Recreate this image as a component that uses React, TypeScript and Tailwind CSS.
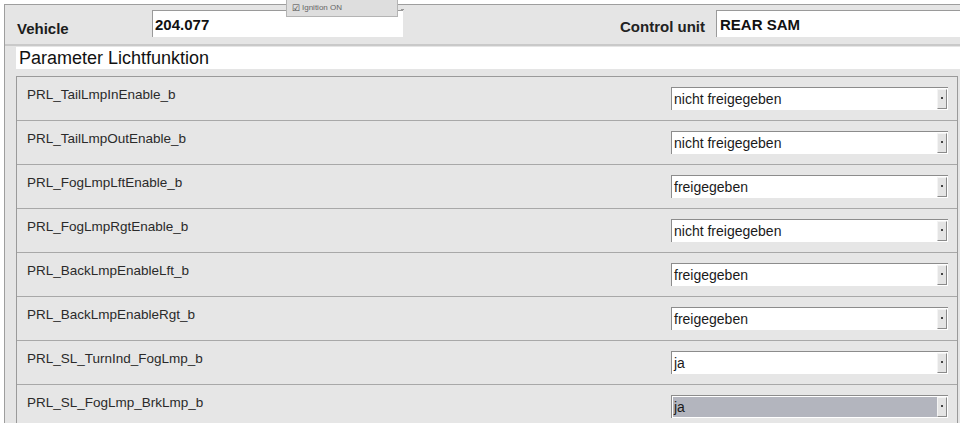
import React from "react"

const params = [
  { name: "PRL_TailLmpInEnable_b", value: "nicht freigegeben" },
  { name: "PRL_TailLmpOutEnable_b", value: "nicht freigegeben" },
  { name: "PRL_FogLmpLftEnable_b", value: "freigegeben" },
  { name: "PRL_FogLmpRgtEnable_b", value: "nicht freigegeben" },
  { name: "PRL_BackLmpEnableLft_b", value: "freigegeben" },
  { name: "PRL_BackLmpEnableRgt_b", value: "freigegeben" },
  { name: "PRL_SL_TurnInd_FogLmp_b", value: "ja" },
  { name: "PRL_SL_FogLmp_BrkLmp_b", value: "ja", selected: true },
]

function Dropdown({ value, selected }: { value: string; selected?: boolean }) {
  return (
    <div className="ml-auto mr-[9px] flex h-[23px] w-[277px] border-l border-t border-[#8c8c8c] bg-white p-[1px]">
      <div
        className={
          selected
            ? "flex flex-1 items-center bg-[#b3b5be] pl-[1px] text-[14px] text-[#1a1a1a]"
            : "flex flex-1 items-center pl-[1px] text-[14px] text-[#1a1a1a]"
        }
      >
        {value}
      </div>
      <div className="flex w-[10px] items-center justify-center border border-b-[#8a8a8a] border-l-[#f4f4f4] border-r-[#8a8a8a] border-t-[#f4f4f4] bg-[#e4e4e4]">
        <div className="mb-[2px] h-[2px] w-[2px] bg-[#444]" />
      </div>
    </div>
  )
}

export default function App() {
  return (
    <div className="relative h-[439px] w-[967px] overflow-hidden bg-white font-['Liberation_Sans',Arial,sans-serif]">
      <div className="ml-[4px] mt-[4px] h-[419px] w-[956px] overflow-hidden border-l border-t border-[#9e9e9e] bg-[#e5e5e5]">
        {/* Header */}
        <div className="flex h-[41px] items-start border-b-2 border-[#c9c9c9] pt-[5px]">
          <div className="w-[147px] pl-[12px] pt-[8px] text-[15px] font-bold text-[#1c1c1c]">Vehicle</div>
          <div className="h-[27px] w-[251px] border-l border-t border-[#9a9a9a] bg-white pl-[2px] pt-[3px] text-[15px] font-bold text-[#111]">
            204.077
          </div>
          <div className="ml-auto pr-[11px] pt-[6px] text-[15px] font-bold text-[#222]">Control unit</div>
          <div className="h-[27px] w-[244px] border-l border-t border-[#9a9a9a] bg-white pl-[3px] pt-[3px] text-[15px] font-bold text-[#111]">
            REAR SAM
          </div>
        </div>

        {/* Title bar */}
        <div className="ml-[11px] mt-[1px] flex h-[22px] items-center bg-white pl-[3px] text-[18px] text-[#111]">
          Parameter Lichtfunktion
        </div>

        {/* Parameter table */}
        <div className="ml-[11px] mt-[7px] w-[942px] border-l border-r border-t border-[#9a9a9a]">
          {params.map((p) => (
            <div key={p.name} className="flex h-[44px] items-center border-b border-[#a8a8a8] bg-[#e6e6e6]">
              <div className="self-start pl-[10px] pt-[10px] text-[13.5px] leading-[16px] text-[#2a2a2a]">{p.name}</div>
              <Dropdown value={p.value} selected={p.selected} />
            </div>
          ))}
        </div>
      </div>

      {/* Ignition status overlay */}
      <div className="absolute left-[286px] top-0 flex h-[17px] w-[112px] items-center gap-[2px] border-b border-l border-r border-[#b4b4b4] bg-[#dedede] pl-[5px] text-[8px] text-[#666]">
        <span className="text-[9px] leading-none text-[#444]">☑</span>
        <span>Ignition ON</span>
      </div>
      <div className="absolute left-[401px] top-[9px] h-[1px] w-[3px] bg-[#999]" />
    </div>
  )
}
